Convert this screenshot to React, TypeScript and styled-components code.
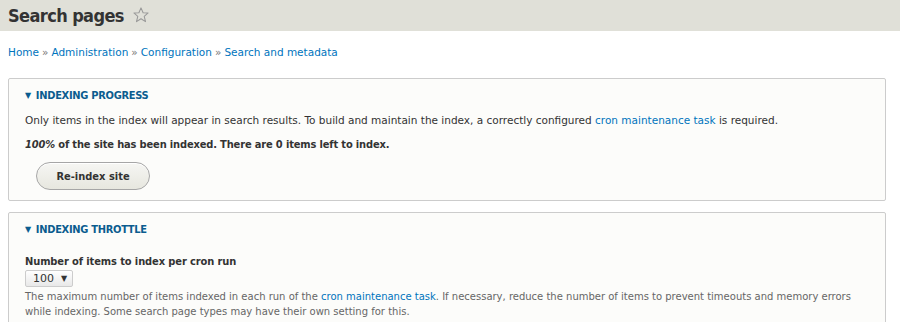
import React from "react";
import styled, { createGlobalStyle } from "styled-components";

const Global = createGlobalStyle`
  html, body { margin: 0; padding: 0; background: #fff; }
  body { font-family: "DejaVu Sans", "Lucida Grande", Verdana, sans-serif; color: #333; }
  a { color: #0074bd; text-decoration: none; }
`;

const boldFont = `"DejaVu Sans Condensed", "DejaVu Sans", sans-serif`;

const Header = styled.header`
  background: #e0e0d8;
  height: 31px;
  padding: 0 8px;
  display: flex;
  align-items: center;
  gap: 8px;
`;

const Title = styled.h1`
  margin: 0;
  font-family: ${boldFont};
  font-size: 18px;
  font-weight: bold;
  color: #333;
  letter-spacing: -0.6px;
`;

const Star = styled.svg`
  width: 18px;
  height: 18px;
  margin-top: -2px;
`;

const Main = styled.main`
  padding: 0 14px 0 8px;
  display: flex;
  flex-direction: column;
`;

const Breadcrumb = styled.nav`
  font-size: 10.5px;
  height: 16px;
  line-height: 16px;
  margin-top: 13px;
  margin-bottom: 18px;
  color: #333;
  a { color: #0074bd; }
`;

const Sep = styled.span`
  color: #777;
  margin: 0 3px;
`;

const Fieldset = styled.section<{ $last?: boolean }>`
  background: #fcfcfa;
  border: 1px solid #ccc;
  border-radius: 2px;
  padding: 9px 16px 10px 16px;
  margin-bottom: ${(p) => (p.$last ? "0" : "11px")};
  display: flex;
  flex-direction: column;
  align-items: flex-start;
`;

const Legend = styled.div`
  font-family: ${boldFont};
  font-size: 11px;
  font-weight: bold;
  text-transform: uppercase;
  color: #0b5c8f;
  line-height: 16px;
  letter-spacing: -0.3px;
  display: flex;
  align-items: center;
  gap: 5px;
`;

const Caret = styled.span`
  font-family: "DejaVu Sans", sans-serif;
  font-size: 8px;
`;

const Para = styled.p<{ $bold?: boolean }>`
  margin: 0;
  font-family: ${(p) => (p.$bold ? boldFont : `"DejaVu Sans", sans-serif`)};
  font-size: ${(p) => (p.$bold ? "11px" : "10.5px")};
  letter-spacing: ${(p) => (p.$bold ? "-0.15px" : "0")};
  line-height: 16px;
  font-weight: ${(p) => (p.$bold ? "bold" : "normal")};
  color: #333;
`;

const Button = styled.button`
  font-family: ${boldFont};
  font-size: 11px;
  font-weight: bold;
  color: #333;
  height: 28px;
  width: 114px;
  padding: 0;
  border: 1px solid #a6a6a6;
  border-radius: 20px;
  background: linear-gradient(#f6f6f3, #e7e7df);
  box-shadow: inset 0 1px 0 #fff;
  margin-left: 11px;
`;

const Label = styled.label`
  font-family: ${boldFont};
  font-size: 11px;
  font-weight: bold;
  letter-spacing: -0.1px;
  line-height: 16px;
  color: #333;
`;

const Select = styled.div`
  display: inline-flex;
  align-items: center;
  gap: 7px;
  height: 17px;
  width: 48px;
  box-sizing: border-box;
  margin: 0 0 2px;
  padding: 0 5px 0 7px;
  border: 1px solid #ccc;
  border-radius: 2px;
  background: linear-gradient(#fff, #e8e8e8);
  font-size: 11px;
  color: #333;
`;

const Desc = styled.div`
  font-size: 10px;
  line-height: 15px;
  color: #666;
  max-width: 830px;
`;

const Spacer = styled.div<{ $h: number }>`
  height: ${(p) => p.$h}px;
`;

export default function App() {
  return (
    <>
      <Global />
      <Header>
        <Title>Search pages</Title>
        <Star viewBox="0 0 24 24" fill="none" stroke="#999" strokeWidth="1.4" strokeLinejoin="round">
          <polygon points="12,2.5 14.8,9 21.5,9.3 16.3,13.8 18,20.8 12,17 6,20.8 7.7,13.8 2.5,9.3 9.2,9" />
        </Star>
      </Header>
      <Main>
        <Breadcrumb>
          <a href="#">Home</a>
          <Sep>»</Sep>
          <a href="#">Administration</a>
          <Sep>»</Sep>
          <a href="#">Configuration</a>
          <Sep>»</Sep>
          <a href="#">Search and metadata</a>
        </Breadcrumb>
        <Fieldset>
          <Legend>
            <Caret>▼</Caret>Indexing progress
          </Legend>
          <Spacer $h={8} />
          <Para>
            Only items in the index will appear in search results. To build and maintain the index, a correctly
            configured <a href="#">cron maintenance task</a> is required.
          </Para>
          <Spacer $h={9} />
          <Para $bold>
            <em>100%</em> of the site has been indexed. There are 0 items left to index.
          </Para>
          <Spacer $h={9} />
          <Button>Re-index site</Button>
        </Fieldset>
        <Fieldset $last>
          <Legend>
            <Caret>▼</Caret>Indexing throttle
          </Legend>
          <Spacer $h={16} />
          <Label>Number of items to index per cron run</Label>
          <Select>
            100 <Caret>▼</Caret>
          </Select>
          <Desc>
            The maximum number of items indexed in each run of the <a href="#">cron maintenance task</a>. If
            necessary, reduce the number of items to prevent timeouts and memory errors while indexing. Some search
            page types may have their own setting for this.
          </Desc>
        </Fieldset>
      </Main>
    </>
  );
}
